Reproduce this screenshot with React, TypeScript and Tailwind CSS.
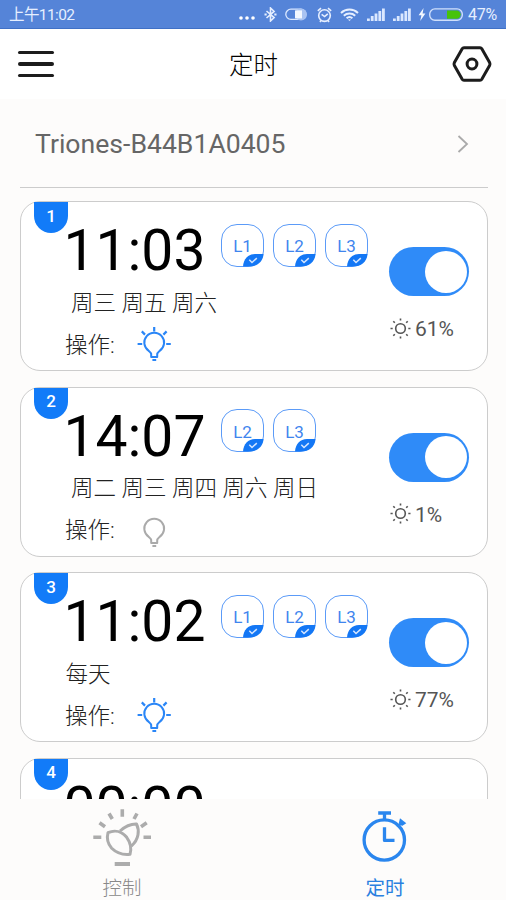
import clsx from "clsx";

interface Timer {
  time: string;
  days: string;
  channels: string[];
  on: boolean;
  brightness: number;
}

const timers: Timer[] = [
  { time: "11:03", days: " 周三 周五 周六", channels: ["L1", "L2", "L3"], on: true, brightness: 61 },
  { time: "14:07", days: " 周二 周三 周四 周六 周日", channels: ["L2", "L3"], on: false, brightness: 1 },
  { time: "11:02", days: "每天", channels: ["L1", "L2", "L3"], on: true, brightness: 77 },
  { time: "00:00", days: "", channels: [], on: true, brightness: 100 },
];

const SignalIcon = () => (
  <svg width="18" height="13" viewBox="0 0 18 13" fill="#dbe8ff">
    <rect x="0" y="10.5" width="2.8" height="2.5" />
    <rect x="3.8" y="8" width="2.8" height="5" />
    <rect x="7.6" y="5.5" width="2.8" height="7.5" />
    <rect x="11.4" y="3" width="2.8" height="10" />
    <rect x="15" y="0.5" width="2.8" height="12.5" />
  </svg>
);

const StatusBar = () => (
  <div className="flex h-[29px] shrink-0 items-center border-b border-[#3f70c6] bg-[#5584d8] pl-[9px] pr-2 text-[#e6efff]">
    <span className="pt-[3px] text-[15.5px] leading-none tracking-[-0.6px]">上午11:02</span>
    <div className="ml-auto flex items-center pt-px">
      <svg className="mr-[9px] mt-[7px]" width="16" height="4" viewBox="0 0 16 4" fill="#fff">
        <circle cx="2" cy="2" r="1.8" />
        <circle cx="8" cy="2" r="1.8" />
        <circle cx="14" cy="2" r="1.8" />
      </svg>
      <svg className="mr-2" width="13" height="15" viewBox="0 0 13 15" fill="none" stroke="#e6efff" strokeWidth="1.6">
        <path d="M2.5 4l7.6 6.6L6.5 14V1l3.6 3.4L2.5 11" />
        <path d="M0.5 7.5h2.2M10.3 7.5h2.2" strokeWidth="1.8" />
      </svg>
      <svg className="mr-[9px]" width="23" height="13" viewBox="0 0 23 13">
        <rect x="0.8" y="1.2" width="20" height="10.2" rx="5.1" fill="none" stroke="#dbe8ff" strokeWidth="1.3" />
        <circle cx="16" cy="6.4" r="6" fill="#a9c3f2" />
        <path d="M10 2.4h7v8h-7z" fill="#f2f7ff" />
      </svg>
      <svg className="mr-2" width="15" height="16" viewBox="0 0 15 16" fill="none" stroke="#e6efff" strokeWidth="1.6">
        <circle cx="7.5" cy="8.6" r="5.8" />
        <path d="M4.6 7.4l3 2.2 3.2-2.8M0.8 3.8L4 1.2M14.2 3.8L11 1.2M3 15l1-1.6M12 15l-1-1.6" />
      </svg>
      <svg className="mr-2" width="19" height="14" viewBox="0 0 19 14" fill="none" stroke="#e6efff" strokeWidth="2">
        <path d="M1 4.9a12.4 12.4 0 0 1 17 0M3.8 7.7a8.4 8.4 0 0 1 11.4 0M6.6 10.3a4.4 4.4 0 0 1 5.8 0" />
        <path d="M7.9 11.4h3.2L9.5 13z" fill="#e6efff" stroke="none" />
      </svg>
      <div className="mr-[7px] flex gap-2">
        <SignalIcon />
        <SignalIcon />
      </div>
      <svg className="mr-[3px]" width="8" height="13" viewBox="0 0 8 13" fill="#f2f7ff">
        <path d="M5.6 0L0.6 7.2h2.8L2.2 13l5.2-7.6H4.6z" />
      </svg>
      <svg className="mr-[5px]" width="34" height="13" viewBox="0 0 34 13">
        <rect x="0.7" y="0.9" width="32.6" height="11.4" rx="5.2" fill="none" stroke="#cfdffb" strokeWidth="1.4" />
        <path d="M18 2.4h9.5a4.2 4.2 0 0 1 0 8.4H18z" fill="#46c30a" />
      </svg>
      <span className="w-[30px] pt-px text-[16px] leading-none tracking-[-0.3px]">47%</span>
    </div>
  </div>
);

const Header = () => (
  <header className="flex h-[70px] shrink-0 items-center justify-between bg-white pl-[18px] pr-[14px]">
    <div className="grid w-[37px] gap-[8px]">
      <span className="h-[3.5px] w-9 rounded-full bg-[#1c1c1c]" />
      <span className="h-[3.5px] w-9 rounded-full bg-[#1c1c1c]" />
      <span className="h-[3.5px] w-9 rounded-full bg-[#1c1c1c]" />
    </div>
    <h1 className="pt-[5px] text-[24.5px] font-light leading-none text-black">定时</h1>
    <svg width="40" height="36" viewBox="0 0 40 36" fill="none" stroke="#1c1c1c" strokeWidth="3" strokeLinejoin="round">
      <path d="M12 1.8h16q1.2 0 1.8 1l7.8 13.7q.7 1.5 0 3l-7.8 13.7q-.6 1-1.8 1H12q-1.2 0-1.8-1L2.4 19.5q-.7-1.5 0-3L10.2 2.8q.6-1 1.8-1z" />
      <circle cx="20" cy="18" r="4.9" />
    </svg>
  </header>
);

const BulbIcon = ({ on }: { on: boolean }) => (
  <svg width="36" height="36" viewBox="0 0 36 36" fill="none" stroke={on ? "#2a86f7" : "#aaa"} strokeWidth="2">
    <path
      d="M15.2 31v-2.6c0-1.6-1-2.3-2.4-3.5a9.9 9.9 0 1 1 10.8 0c-1.4 1.2-2.4 1.9-2.4 3.5v2.6z"
      strokeLinejoin="round"
    />
    <path d="M16.4 34h3.8" />
    {on && <path d="M18.2 1v4.4M5.8 5.4l3.2 3.2M30.6 5.4l-3.2 3.2M1.6 18h4.6M30.2 18h4.6" strokeWidth="2.2" />}
  </svg>
);

const SunIcon = () => (
  <svg width="21" height="21" viewBox="0 0 21 21" fill="none" stroke="#555" strokeWidth="1.6">
    <circle cx="10.5" cy="10.5" r="4.8" />
    <path d="M10.5 0.5v2M10.5 18.5v2M0.5 10.5h2.2M18.3 10.5h2.2M3.3 3.3l1.5 1.5M16.2 16.2l1.5 1.5M3.3 17.7l1.5-1.5M16.2 4.8l1.5-1.5" />
  </svg>
);

const Channel = ({ name }: { name: string }) => (
  <div className="relative flex h-[43px] w-[43px] items-center justify-center rounded-[16px] border border-[#5b9bf8] text-[17px] leading-none text-[#3f85ee]">
    <span className="pt-[3px]">{name}</span>
    <svg className="absolute -bottom-px -right-px" width="22" height="14" viewBox="0 0 22 14">
      <path d="M1 13.5C1.5 6 6 1 13 1h8.5C21 9 15 13.5 7 13.5z" fill="#1377f5" />
      <path d="M7.3 6.8l2.7 2.7 4.8-4.4" fill="none" stroke="#d5e6ff" strokeWidth="1.5" />
    </svg>
  </div>
);

const Toggle = () => (
  <div className="flex h-[49px] w-20 items-center justify-end rounded-full bg-[#2f8bf8] pr-[2px]">
    <span className="h-[42px] w-[42px] rounded-full bg-white" />
  </div>
);

const TimerCard = ({ timer, index }: { timer: Timer; index: number }) => (
  <li className="relative flex h-[170px] shrink-0 justify-between rounded-[20px] border border-[#ccc] bg-white pl-[44px] pr-[18px]">
    <span className="absolute left-[13px] top-0 flex h-[31px] w-[34px] items-center justify-center rounded-b-[17px] bg-[#127bf8] pb-[3px] text-[17px] font-medium leading-none text-white">
      {index}
    </span>
    <div className="pt-5">
      <div className="flex h-[60px]">
        <p className="-ml-[1.5px] w-[157.5px] text-[57px] leading-[58px] text-black">{timer.time}</p>
        <div className="flex gap-[9px] pt-[1.5px]">
          {timer.channels.map((channel) => (
            <Channel key={channel} name={channel} />
          ))}
        </div>
      </div>
      <p className="flex h-[42px] items-center whitespace-pre pl-[0.5px] text-[22.5px] font-light leading-none text-[#222]">
        {timer.days}
      </p>
      <div className="flex h-10 items-center">
        <span className="w-[71px] pt-[2px] text-[22.5px] font-light leading-none text-[#222]">操作:</span>
        <BulbIcon on={timer.on} />
      </div>
    </div>
    <div className="w-20 pt-[45px]">
      <Toggle />
      <div className="mt-5 flex items-center gap-[4px] pl-px text-[21px] leading-none text-[#555]">
        <SunIcon />
        <span className="pt-[3px]">{timer.brightness}%</span>
      </div>
    </div>
  </li>
);

const ControlIcon = () => (
  <svg width="60" height="60" viewBox="0 0 60 60" fill="none" stroke="#acacac" strokeWidth="3" strokeLinejoin="round">
    <path d="M16 24.7C23 21.5 30 23.5 34.7 29.3C38.5 34.5 39.8 40 38 46.3C31.5 47 25 45.5 19.7 40.3C15.5 35.5 14.5 30.5 16 24.7z" />
    <path d="M28 23C33 18.5 38 15.8 44.5 16C47.5 22 47.2 31.5 39.3 38" />
    <path
      d="M30.3 1.3v7.4M17 5.5l3.3 5.5M45 5.5L42 11M7.5 14.7l5.5 4M54.7 14.7L49 18.7M1.3 29.3h8M51.5 29.3H59"
      strokeWidth="3.6"
    />
    <path d="M22.7 56H38" strokeWidth="4" />
  </svg>
);

const TimerIcon = () => (
  <svg width="48" height="56" viewBox="0 0 48 56" fill="none" stroke="#2a86ee" strokeWidth="3.3">
    <circle cx="23.3" cy="32" r="20.2" />
    <path d="M17.2 5h12.8M23.5 5v7" />
    <path d="M23.5 19.2v13.2H33.5" strokeLinejoin="round" />
    <path d="M39 10.2l6.3 5-4.3 2.7-3.2-3z" fill="#2a86ee" stroke="none" />
    <path d="M36.5 19l4-4.5" strokeWidth="2.5" />
  </svg>
);

const tabs = [
  { label: "控制", icon: <ControlIcon />, active: false },
  { label: "定时", icon: <TimerIcon />, active: true },
];

export default function App() {
  return (
    <div className="flex h-[900px] w-[506px] flex-col overflow-hidden bg-[#fdfcfb] font-[Roboto,'Noto_Sans_CJK_SC',sans-serif]">
      <StatusBar />
      <Header />

      <main className="h-[700px] shrink-0 overflow-hidden px-5">
        <div className="-mr-[2px] flex h-[89px] items-center justify-between border-b border-[#ccc] pl-[15px] pr-[18px] text-[#666]">
          <span className="pt-[2px] text-[26.6px] leading-none">Triones-B44B1A0405</span>
          <svg className="mt-[2px]" width="14" height="20" viewBox="0 0 14 20" fill="none" stroke="#aaa" strokeWidth="1.8">
            <path d="M2.5 2l8.5 8-8.5 8" />
          </svg>
        </div>
        <ul className="-mr-[2px] flex flex-col gap-[15.6px] pt-[13px]">
          {timers.map((timer, i) => (
            <TimerCard key={i} timer={timer} index={i + 1} />
          ))}
        </ul>
      </main>

      <nav className="flex h-[101px] shrink-0 justify-between pl-[82px] pr-[81px] pt-[9px]">
        {tabs.map((tab) => (
          <div
            key={tab.label}
            className={clsx("flex w-20 flex-col items-center", tab.active ? "text-[#2a80e0]" : "font-light text-[#888]")}
          >
            <div className="flex h-[69px] shrink-0 items-start">{tab.icon}</div>
            <span className="text-[19.5px] leading-6">{tab.label}</span>
          </div>
        ))}
      </nav>
    </div>
  );
}
